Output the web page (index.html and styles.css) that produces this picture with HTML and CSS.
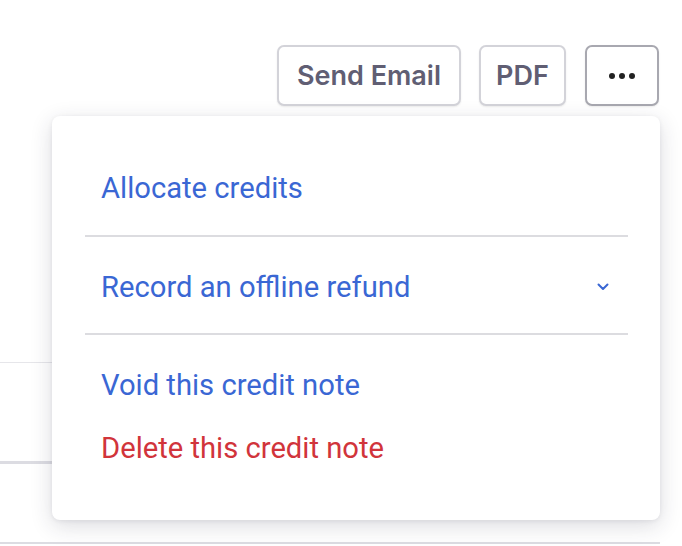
FILE: index.html
```html
<!DOCTYPE html>
<html>
<head>
<meta charset="utf-8">
<link rel="stylesheet" href="styles.css">
</head>
<body>
<div class="page">
  <div class="toolbar">
    <button class="btn btn-email">Send Email</button>
    <button class="btn btn-pdf">PDF</button>
    <button class="btn btn-more" aria-label="More">
      <svg width="28" height="8" viewBox="0 0 28 8"><circle cx="4" cy="4" r="3" fill="#222"/><circle cx="14" cy="4" r="3" fill="#222"/><circle cx="24" cy="4" r="3" fill="#222"/></svg>
    </button>
  </div>
  <div class="content">
    <div class="row row-a"></div>
    <div class="row row-b"></div>
    <div class="row row-c"></div>
  </div>
  <div class="menu">
    <div class="item blue">Allocate credits</div>
    <div class="sep"></div>
    <div class="item blue item-expand">
      <span>Record an offline refund</span>
      <svg class="chev" width="12" height="8" viewBox="0 0 12 8"><path d="M1.5 1.5 L6 6 L10.5 1.5" fill="none" stroke="#3a67d4" stroke-width="2" stroke-linecap="round" stroke-linejoin="round"/></svg>
    </div>
    <div class="sep sep2"></div>
    <div class="item blue item-void">Void this credit note</div>
    <div class="item red item-delete">Delete this credit note</div>
  </div>
</div>
</body>
</html>
```
FILE: styles.css
```css
html, body {
  margin: 0;
  padding: 0;
  background: #fff;
}
.page {
  position: relative;
  width: 682px;
  height: 546px;
  overflow: hidden;
  font-family: Roboto, "Liberation Sans", sans-serif;
}
.toolbar {
  display: flex;
  justify-content: flex-end;
  gap: 18px;
  padding: 45px 23px 0 0;
}
.btn {
  box-sizing: border-box;
  height: 61px;
  border: 2px solid #d3d3d9;
  border-radius: 7px;
  background: #fff;
  color: #605e73;
  font-family: Inter, "Noto Sans", sans-serif;
  font-weight: 600;
  font-size: 27px;
  padding: 0;
  box-shadow: 0 1px 2px rgba(0,0,0,0.08);
  display: flex;
  align-items: center;
  justify-content: center;
}
.btn-email { width: 184px; }
.btn-pdf { width: 87px; }
.btn-more {
  width: 74px;
  border-color: #a8a8b0;
  margin-left: 1px;
}
.content {
  width: 660px;
  padding-top: 256px;
}
.row {
  box-sizing: border-box;
}
.row-a {
  height: 99px;
  border-top: 1px solid #e6e6ea;
}
.row-b {
  height: 81px;
  border-top: 3px solid #dcdce2;
}
.row-c {
  border-top: 2px solid #dcdce2;
}
.menu {
  position: absolute;
  left: 52px;
  top: 116px;
  width: 608px;
  height: 404px;
  box-sizing: border-box;
  background: #fff;
  border-radius: 8px;
  box-shadow: 0 6px 22px rgba(40,40,60,0.16), 0 1px 4px rgba(40,40,60,0.08);
  padding: 53px 0 0 0;
}
.item {
  height: 38px;
  line-height: 38px;
  font-size: 29.2px;
  padding-left: 49px;
  padding-right: 50px;
}
.blue { color: #3a67d4; }
.red { color: #d1343b; }
.sep {
  height: 2px;
  background: #dcdce0;
  margin: 28px 32px 31px 33px;
}
.sep2 {
  margin-top: 27px;
}
.item-expand {
  display: flex;
  justify-content: space-between;
  align-items: center;
}
.chev {
  margin-right: 1px;
}
.item-delete {
  margin-top: 25px;
}
```
